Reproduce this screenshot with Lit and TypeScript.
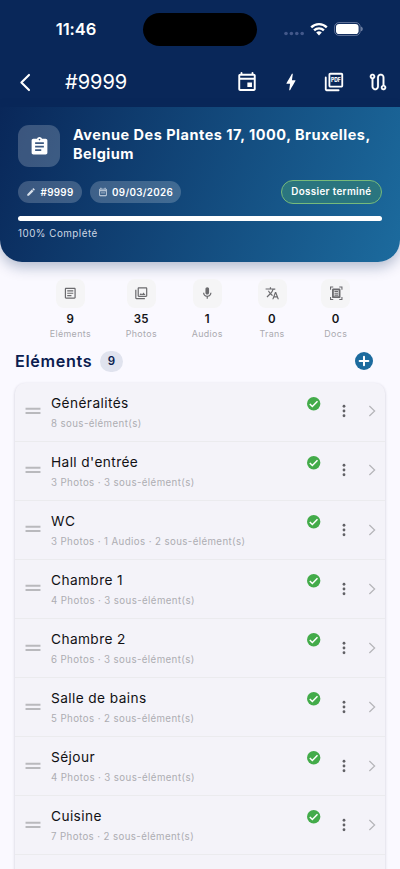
import { LitElement, html, svg, css } from "lit";
import { customElement, property } from "lit/decorators.js";

const icons: Record<string, unknown> = {
  back: svg`<path d="M16 3.4 7.3 12 16 20.6" fill="none" stroke="currentColor" stroke-width="2.4" stroke-linecap="round" stroke-linejoin="round"/>`,
  event: svg`<path fill-rule="evenodd" d="M17.4 12.5h-5v5h5v-5zM17 2v1H7V2c0-.6-.4-1-1-1s-1 .4-1 1v1c-1.7 0-2.5.9-2.5 2.2v14.3c0 1.2.9 2.2 2.2 2.2h14.6c1.3 0 2.2-1 2.2-2.2V5.2C21.5 3.9 20.7 3 19 3V2c0-.6-.4-1-1-1s-1 .4-1 1zM4.6 19.6V9.500h14.800v10.100zM4.600 7.300V5.200h14.800v2.100z"/>`,
  bolt: svg`<path d="M11 21h-1l1-7H7.5c-.58 0-.57-.32-.38-.66l.07-.12C8.48 10.94 10.42 7.54 13 3h1l-1 7h3.5c.49 0 .56.33.47.51l-.07.15C12.96 17.55 11 21 11 21z"/>`,
  pdf: svg`<path d="M20 2H8c-1.1 0-2 .9-2 2v12c0 1.1.9 2 2 2h12c1.1 0 2-.9 2-2V4c0-1.1-.9-2-2-2zm0 14H8V4h12v12zM4 7c0-.6-.4-1-1-1s-1 .4-1 1v13c0 1.1.9 2 2 2h13c.6 0 1-.4 1-1s-.4-1-1-1H4V7z"/><text x="14" y="12.5" text-anchor="middle" font-family="Inter, sans-serif" font-size="6.4" font-weight="800" textLength="10.6" lengthAdjust="spacingAndGlyphs">PDF</text>`,
  route: svg`<path d="M19 15.18V7c0-2.21-1.79-4-4-4s-4 1.79-4 4v10c0 1.1-.9 2-2 2s-2-.9-2-2V8.82C8.16 8.4 9 7.3 9 6c0-1.66-1.34-3-3-3S3 4.34 3 6c0 1.3.84 2.4 2 2.82V17c0 2.21 1.79 4 4 4s4-1.79 4-4V7c0-1.1.9-2 2-2s2 .9 2 2v8.18A2.996 2.996 0 0 0 18 21c1.66 0 3-1.34 3-3 0-1.3-.84-2.4-2-2.82zM6 7c-.55 0-1-.45-1-1s.45-1 1-1 1 .45 1 1-.45 1-1 1zm12 12c-.55 0-1-.45-1-1s.45-1 1-1 1 .45 1 1-.45 1-1 1z" stroke="currentColor" stroke-width=".15"/>`,
  assignment: svg`<path d="M19 3h-4.18C14.4 1.84 13.3 1 12 1s-2.4.84-2.82 2H5c-1.1 0-2 .9-2 2v14c0 1.1.9 2 2 2h14c1.1 0 2-.9 2-2V5c0-1.1-.9-2-2-2zm-7 0c.55 0 1 .45 1 1s-.45 1-1 1-1-.45-1-1 .45-1 1-1zm2 14H7v-2h7v2zm3-4H7v-2h10v2zm0-4H7V7h10v2z"/>`,
  edit: svg`<path d="M3 17.46v3.04c0 .28.22.5.5.5h3.04c.13 0 .26-.05.35-.15L17.81 9.94l-3.75-3.75L3.15 17.1c-.1.1-.15.22-.15.36zM20.71 7.04a.996.996 0 0 0 0-1.41l-2.34-2.34a.996.996 0 0 0-1.41 0l-1.83 1.83 3.75 3.75 1.83-1.83z"/>`,
  calendar: svg`<path d="M19 4h-1V2h-2v2H8V2H6v2H5c-1.1 0-2 .9-2 2v14c0 1.1.9 2 2 2h14c1.1 0 2-.9 2-2V6c0-1.1-.9-2-2-2zm0 16H5V10h14v10zm0-12H5V6h14v2z"/><path d="M7 12h10v1.5H7zM7 15.5h10V17H7z" opacity=".5"/>`,
  article: svg`<path d="M19 5v14H5V5h14m0-2H5c-1.1 0-2 .9-2 2v14c0 1.1.9 2 2 2h14c1.1 0 2-.9 2-2V5c0-1.1-.9-2-2-2z"/><path d="M14 17H7v-2h7v2zm3-4H7v-2h10v2zm0-4H7V7h10v2z"/>`,
  photos: svg`<path d="M20 4v12H8V4h12m0-2H8c-1.1 0-2 .9-2 2v12c0 1.1.9 2 2 2h12c1.1 0 2-.9 2-2V4c0-1.1-.9-2-2-2zm-8.5 9.67 1.69 2.26 2.48-3.1L19 15H9zM2 6v14c0 1.1.9 2 2 2h14v-2H4V6H2z"/>`,
  mic: svg`<path d="M12 14c1.66 0 3-1.34 3-3V5c0-1.66-1.34-3-3-3S9 3.34 9 5v6c0 1.66 1.34 3 3 3z"/><path d="M17 11c0 2.76-2.24 5-5 5s-5-2.24-5-5H5c0 3.53 2.61 6.43 6 6.92V21h2v-3.08c3.39-.49 6-3.39 6-6.92h-2z"/>`,
  translate: svg`<path d="m12.87 15.07-2.54-2.51.03-.03A17.52 17.52 0 0 0 14.07 6H17V4h-7V2H8v2H1v1.99h11.17C11.5 7.92 10.44 9.75 9 11.35 8.07 10.32 7.3 9.19 6.69 8h-2c.73 1.63 1.73 3.17 2.98 4.56l-5.09 5.02L4 19l5-5 3.11 3.11.76-2.04zM18.5 10h-2L12 22h2l1.12-3h4.75L21 22h2l-4.5-12zm-2.62 7 1.62-4.33L19.12 17h-3.24z"/>`,
  scanner: svg`<path d="M7 2.5H3.5V6H1.7V1H7v1.5zm15.3 3.5V1H17v1.5h3.5V6h1.8zM7 21.5H3.5V18H1.7v5H7v-1.5zm13.5-3.5v3.5H17V23h5.3v-5h-1.8z"/><path fill-rule="evenodd" d="M7 4h10a2 2 0 0 1 2 2v12a2 2 0 0 1-2 2H7a2 2 0 0 1-2-2V6a2 2 0 0 1 2-2zM8 7v10h8V7z"/><path d="M9 8h6v2H9zM9 11h6v2H9zM9 14h6v2H9z"/>`,
  add: svg`<circle cx="12" cy="12" r="12"/><path d="M12 6.2v11.6M6.2 12h11.6" stroke="#fff" stroke-width="2.7" stroke-linecap="round"/>`,
  check: svg`<circle cx="12" cy="12" r="12"/><path d="m5 12.4 4.6 4.5 9.2-9.3" fill="none" stroke="#fff" stroke-width="2.7"/>`,
  more: svg`<circle cx="12" cy="4.9" r="2.1"/><circle cx="12" cy="12" r="2.1"/><circle cx="12" cy="19.1" r="2.1"/>`,
  chevron: svg`<path d="M7.5 3.5 16.5 12l-9 8.5" fill="none" stroke="currentColor" stroke-width="2.1"/>`,
  handle: svg`<path d="M.8 8.7h22.4M.8 15h22.4" stroke="currentColor" stroke-width="2.9"/>`,
};

@customElement("ui-icon")
class UiIcon extends LitElement {
  @property() name = "";
  static styles = css`
    :host { display: block; flex: none; width: 22px; height: 22px; }
    .glyph { display: block; width: 100%; height: 100%; fill: currentColor; overflow: visible; }
  `;
  render() {
    return html`<svg class="glyph" viewBox="0 0 24 24">${icons[this.name]}</svg>`;
  }
}

@customElement("status-bar")
class StatusBar extends LitElement {
  static styles = css`
    :host { display: grid; grid-template-columns: 143px 114px 1fr; height: 58px; align-items: center; color: #fff; }
    .time { padding: 0 0 0 9px; text-align: center; font-size: 16.5px; font-weight: 600; letter-spacing: -.1px; }
    .island { height: 33px; border-radius: 17px; background: #000; }
    .signals { display: flex; align-items: center; padding-left: 27px; }
    .dots { width: 21px; height: 14px; fill: #43588a; }
    .wifi { width: 18px; height: 14px; margin-left: 5px; fill: none; stroke: #fff; stroke-width: 2.4; }
    .battery { width: 29px; height: 14px; margin-left: 6px; }
  `;
  render() {
    return html`
      <div class="time">11:46</div>
      <div class="island"></div>
      <div class="signals">
        <svg class="dots" viewBox="0 0 21 14"><circle cx="2" cy="11.5" r="1.8"/><circle cx="7.4" cy="11.5" r="1.8"/><circle cx="12.8" cy="11.5" r="1.8"/><circle cx="18.2" cy="11.5" r="1.8"/></svg>
        <svg class="wifi" viewBox="0 0 18 14"><path d="M1.2 5.3a11.2 11.2 0 0 1 15.6 0M4.1 8.4a7 7 0 0 1 9.8 0"/><path d="M9 13.5 6.2 10.6a4 4 0 0 1 5.6 0z" fill="#fff" stroke="none"/></svg>
        <svg class="battery" viewBox="0 0 29 14"><rect x=".6" y=".6" width="25.6" height="12.8" rx="4.3" fill="none" stroke="#65769b"/><rect x="2" y="2" width="22.6" height="10" rx="3.1" fill="#fff"/><path d="M27.2 4.6v4.7c1.9-.7 1.9-4 0-4.7z" fill="#8291b0"/></svg>
      </div>`;
  }
}

@customElement("element-row")
class ElementRow extends LitElement {
  @property() label = "";
  @property() detail = "";
  static styles = css`
    :host { display: flex; height: 59.07px; box-sizing: border-box; border-bottom: 1px solid #ebebee; padding: 0 6.5px 0 10px; }
    .handle { width: 16px; height: 16px; margin: 20.8px 10px 0 0; color: #b9b9bd; }
    .copy { flex: 1; padding-top: 11.5px; }
    .label { font-size: 13.7px; line-height: 19px; letter-spacing: .4px; color: #111114; }
    .detail { margin-top: 3px; font-size: 9.7px; line-height: 15px; letter-spacing: .4px; color: #adadb2; white-space: nowrap; }
    .check { width: 13.4px; height: 13.4px; margin: 14.1px 14.8px 0 0; color: #43ab4a; }
    .more { width: 16px; height: 16px; margin: 20.9px 13px 0 0; color: #606065; }
    .chevron { width: 14px; height: 14px; margin-top: 21.9px; color: #b5b5b9; }
  `;
  render() {
    return html`
      <ui-icon class="handle" name="handle"></ui-icon>
      <div class="copy"><div class="label">${this.label}</div><div class="detail">${this.detail}</div></div>
      <ui-icon class="check" name="check"></ui-icon>
      <ui-icon class="more" name="more"></ui-icon>
      <ui-icon class="chevron" name="chevron"></ui-icon>`;
  }
}

@customElement("app-root")
class AppRoot extends LitElement {
  static styles = css`
    :host { display: flex; flex-direction: column; height: 869px; overflow: hidden; background: #faf9ff; font-family: Inter, "Liberation Sans", sans-serif; }
    .top { flex: none; height: 107px; background: #092759; color: #fff; }
    .bar { display: flex; align-items: center; height: 48px; padding: 0 11px 0 15px; }
    .back { width: 21px; height: 21px; }
    .heading { flex: 1; padding-left: 29px; font-size: 20px; line-height: 24px; letter-spacing: 0; }
    .actions { display: flex; gap: 21.7px; }
    .hero { flex: none; height: 155px; box-sizing: border-box; padding: 18px; border-radius: 0 0 22px 22px; color: #fff; background: linear-gradient(111deg, #092759, #1c6b9e); box-shadow: 0 5px 14px rgba(9, 39, 89, .3); }
    .address { display: flex; gap: 13px; }
    .tile { display: grid; place-items: center; width: 42px; height: 42px; border-radius: 11px; background: rgba(255, 255, 255, .2); }
    .tile ui-icon { width: 21px; height: 21px; }
    .place { flex: 1; font-size: 14.5px; line-height: 19px; font-weight: 700; letter-spacing: .5px; white-space: nowrap; }
    .chips { display: flex; align-items: center; height: 24px; margin-top: 13px; }
    .chip { display: flex; align-items: center; height: 22px; box-sizing: border-box; padding: 0 8px; gap: 4.5px; margin-right: 8px; border-radius: 11px; background: rgba(255, 255, 255, .2); font-size: 9.8px; font-weight: 600; letter-spacing: .33px; }
    .chip ui-icon { width: 10px; height: 10px; color: #d8e0ea; }
    .done { margin-left: auto; height: 24px; line-height: 22px; box-sizing: border-box; padding: 0 9.5px; border: 1px solid #76ba7b; border-radius: 12px; background: #2a757f; font-size: 9.8px; font-weight: 600; letter-spacing: .36px; }
    .track { height: 5px; margin-top: 12px; border-radius: 2.5px; background: #fff; }
    .progress { margin-top: 5.5px; font-size: 9.8px; line-height: 14px; letter-spacing: .5px; color: #cdd7e4; }
    .stats { display: flex; justify-content: space-evenly; flex: none; padding: 16.5px 15px 0; height: 86px; box-sizing: border-box; }
    .stat { display: flex; flex-direction: column; align-items: center; min-width: 29px; }
    .box { display: grid; place-items: center; width: 29px; height: 29px; border-radius: 8px; background: #f5f5f6; color: #6b6b6e; }
    .box ui-icon { width: 14.5px; height: 14.5px; }
    .count { margin-top: 4px; font-size: 11.5px; line-height: 15px; font-weight: 600; letter-spacing: .3px; color: #131316; }
    .name { font-size: 8.9px; line-height: 13px; letter-spacing: .36px; color: #aaaaaf; }
    .section { display: flex; align-items: center; flex: none; height: 26px; padding: 0 27px 0 15px; }
    .title { font-size: 16.2px; line-height: 22px; font-weight: 600; letter-spacing: .65px; color: #0b1d50; }
    .badge { margin-left: 7.5px; width: 23px; height: 21px; line-height: 21px; border-radius: 10.5px; text-align: center; background: #e0e3ee; font-size: 11.5px; font-weight: 600; color: #0b1d50; }
    .add { width: 18px; height: 18px; margin-left: auto; color: #1c6b9e; }
    .list { flex: 1; min-height: 0; overflow: hidden; margin-top: 4px; padding: 4.5px 12px 0; }
    .sheet { height: 560px; margin: 0 3px; border-radius: 10px; background: #f4f3f9; box-shadow: 0 1px 3px rgba(30, 30, 60, .22); }
  `;

  private stats = [
    ["article", "9", "Eléments"],
    ["photos", "35", "Photos"],
    ["mic", "1", "Audios"],
    ["translate", "0", "Trans"],
    ["scanner", "0", "Docs"],
  ];

  private rows = [
    ["Généralités", "8 sous-élément(s)"],
    ["Hall d'entrée", "3 Photos · 3 sous-élément(s)"],
    ["WC", "3 Photos · 1 Audios · 2 sous-élément(s)"],
    ["Chambre 1", "4 Photos · 3 sous-élément(s)"],
    ["Chambre 2", "6 Photos · 3 sous-élément(s)"],
    ["Salle de bains", "5 Photos · 2 sous-élément(s)"],
    ["Séjour", "4 Photos · 3 sous-élément(s)"],
    ["Cuisine", "7 Photos · 2 sous-élément(s)"],
  ];

  render() {
    return html`
      <header class="top">
        <status-bar></status-bar>
        <div class="bar">
          <ui-icon class="back" name="back"></ui-icon>
          <div class="heading">#9999</div>
          <div class="actions">
            <ui-icon name="event"></ui-icon><ui-icon name="bolt"></ui-icon><ui-icon name="pdf"></ui-icon><ui-icon name="route"></ui-icon>
          </div>
        </div>
      </header>
      <section class="hero">
        <div class="address">
          <div class="tile"><ui-icon name="assignment"></ui-icon></div>
          <div class="place">Avenue Des Plantes 17, 1000, Bruxelles,<br />Belgium</div>
        </div>
        <div class="chips">
          <div class="chip"><ui-icon name="edit"></ui-icon>#9999</div>
          <div class="chip"><ui-icon name="calendar"></ui-icon>09/03/2026</div>
          <div class="done">Dossier terminé</div>
        </div>
        <div class="track"></div>
        <div class="progress">100% Complété</div>
      </section>
      <section class="stats">
        ${this.stats.map(([icon, count, name]) => html`
          <div class="stat">
            <div class="box"><ui-icon name=${icon}></ui-icon></div>
            <div class="count">${count}</div>
            <div class="name">${name}</div>
          </div>`)}
      </section>
      <div class="section">
        <div class="title">Eléments</div>
        <div class="badge">9</div>
        <ui-icon class="add" name="add"></ui-icon>
      </div>
      <div class="list">
        <div class="sheet">
          ${this.rows.map(([label, detail]) => html`<element-row label=${label} detail=${detail}></element-row>`)}
        </div>
      </div>`;
  }
}
